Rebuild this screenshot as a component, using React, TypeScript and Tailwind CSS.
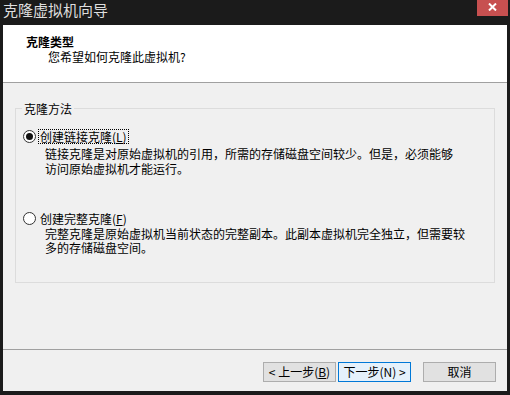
import React from "react";

const Radio = ({ checked }: { checked?: boolean }) => (
  <span className="w-[13px] h-[13px] rounded-full border border-[#333333] bg-white flex items-center justify-center shrink-0">
    {checked && <span className="w-[7px] h-[7px] rounded-full bg-[#111111]" />}
  </span>
);

const Button = ({
  children,
  primary,
}: {
  children: React.ReactNode;
  primary?: boolean;
}) => (
  <div
    className={
      primary
        ? "w-[73px] h-[20px] border border-[#0078d7] bg-[#e5f1fb] flex items-center justify-center text-[12px] leading-[14px]"
        : "w-[73px] h-[20px] border border-[#adadad] bg-[#e1e1e1] flex items-center justify-center text-[12px] leading-[14px]"
    }
  >
    {children}
  </div>
);

const App = () => {
  return (
    <div className="w-[510px] h-[395px] bg-[#1b1b1b] flex flex-col font-['Noto_Sans_CJK_SC',sans-serif] text-black">
      {/* title bar */}
      <div className="h-[25px] flex items-start justify-between shrink-0">
        <span className="pl-[3px] text-[15px] leading-[20px] text-[#dedede]">
          克隆虚拟机向导
        </span>
        <div className="w-[31px] h-[16px] mr-[2px] bg-[#c75050] flex items-start justify-center pt-[3px]">
          <svg width="9" height="8" viewBox="0 0 9 8">
            <path d="M1 0.5 L8 7.5 M8 0.5 L1 7.5" stroke="white" strokeWidth="2" />
          </svg>
        </div>
      </div>

      <div className="mx-[3px] h-[366px] flex flex-col bg-[#f0f0f0]">
        {/* header */}
        <div className="h-[58px] bg-white border-b border-[#a0a0a0] pt-[9px] pl-[23px] shrink-0">
          <div className="text-[12px] leading-[15px] font-bold">克隆类型</div>
          <div className="text-[12px] leading-[15px] pl-[22px]">您希望如何克隆此虚拟机?</div>
        </div>

        {/* group box */}
        <div className="relative mx-[12px] mt-[25px] h-[175px] border border-[#dcdcdc] pt-[19px] shrink-0">
          <span className="absolute -top-[8px] left-[6px] px-[2px] bg-[#f0f0f0] text-[12px] leading-[15px]">
            克隆方法
          </span>

          <div className="flex items-center h-[16px] pl-[7px] gap-[2px]">
            <Radio checked />
            <span className="border border-dotted border-black px-[1px] text-[12px] leading-[13px]">
              创建链接克隆(<span className="underline">L</span>)
            </span>
          </div>
          <div className="pl-[29px] mt-[2px] text-[12px] leading-[15px]">
            <div>链接克隆是对原始虚拟机的引用，所需的存储磁盘空间较少。但是，必须能够</div>
            <div>访问原始虚拟机才能运行。</div>
          </div>

          <div className="flex items-center h-[16px] pl-[7px] gap-[2px] mt-[34px]">
            <Radio />
            <span className="border border-transparent px-[1px] text-[12px] leading-[13px]">
              创建完整克隆(<span className="underline">F</span>)
            </span>
          </div>
          <div className="pl-[29px] mt-[1px] text-[12px] leading-[14px]">
            <div>完整克隆是原始虚拟机当前状态的完整副本。此副本虚拟机完全独立，但需要较</div>
            <div>多的存储磁盘空间。</div>
          </div>
        </div>

        {/* footer */}
        <div className="mt-[66px] h-px bg-[#a0a0a0] shrink-0" />
        <div className="flex justify-end items-start mt-[12px] pr-[11px]">
          <Button>
            &lt; 上一步(<span className="underline">B</span>)
          </Button>
          <div className="w-[2px]" />
          <Button primary>下一步(N) &gt;</Button>
          <div className="w-[12px]" />
          <Button>取消</Button>
        </div>
      </div>
    </div>
  );
};

export default App;
